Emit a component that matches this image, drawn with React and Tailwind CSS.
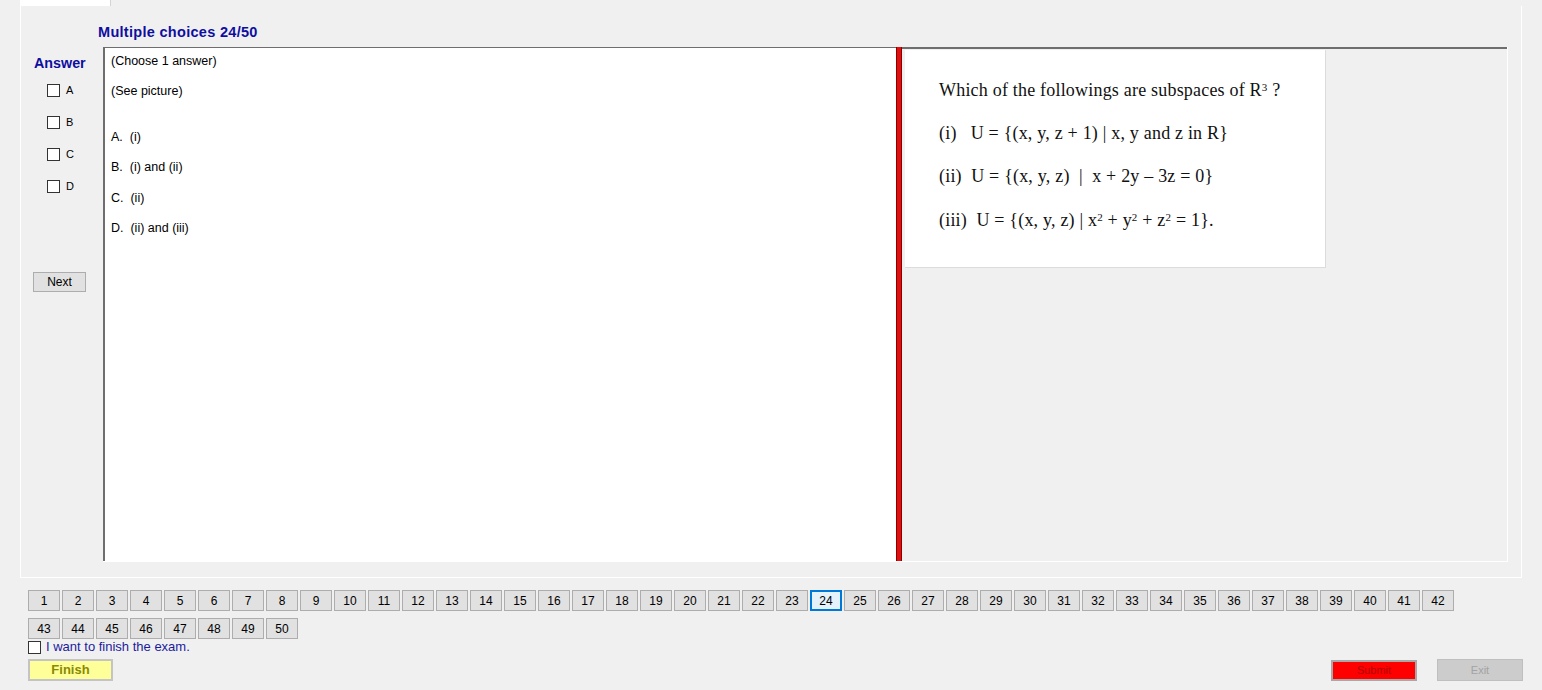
export default function App() {
  const row1 = Array.from({ length: 42 }, (_, i) => i + 1);
  const row2 = Array.from({ length: 8 }, (_, i) => i + 43);
  const letters = ["A", "B", "C", "D"];

  const NumBtn = ({ n }) => (
    <div
      className={
        n === 24
          ? "w-[32px] h-[21px] border-2 border-[#0078d7] bg-[#e5f1fb] text-[12px] flex items-center justify-center text-black"
          : "w-[32px] h-[21px] border border-[#adadad] bg-[#e1e1e1] text-[12px] flex items-center justify-center text-black"
      }
    >
      {n}
    </div>
  );

  return (
    <div className="w-[1542px] h-[690px] bg-[#f0f0f0] overflow-hidden text-black font-['Liberation_Sans',Arial,sans-serif]">
      {/* tab header */}
      <div className="ml-[20px] w-[91px] h-[6px] bg-white border-r border-[#d4d4d4]" />

      {/* tab page */}
      <div className="ml-[20px] w-[1502px] h-[572px] border-l border-r border-b border-white flex flex-col">
        <div className="h-[41px] pl-[77px] pt-[18px] text-[14.5px] leading-[16px] font-bold text-[#0e0ea0] tracking-[0.3px]">
          Multiple choices 24/50
        </div>

        <div className="flex h-[515px]">
          {/* left column */}
          <div className="w-[82px] flex flex-col">
            <div className="pl-[13px] pt-[8px] text-[14.3px] leading-[16px] font-bold text-[#0e0ea0]">
              Answer
            </div>
            <div className="flex flex-col gap-[19px] mt-[13px] ml-[26px]">
              {letters.map((l) => (
                <div key={l} className="flex items-center h-[13px]">
                  <div className="w-[13px] h-[13px] border border-[#333333] bg-white" />
                  <span className="ml-[6px] text-[11px] leading-[12px] -mt-[2px]">{l}</span>
                </div>
              ))}
            </div>
            <div className="ml-[12px] mt-[79px] w-[53px] h-[20px] border border-[#adadad] bg-[#e1e1e1] text-[12px] flex items-center justify-center">
              Next
            </div>
          </div>

          {/* question text + picture */}
          <div className="flex border-b border-r border-white">
            <div className="w-[793px] h-full bg-white border-l-2 border-t border-[#6e6e6e] pl-[6px] pt-[6px] text-[12.5px] leading-[15.2px] whitespace-pre">
              {"(Choose 1 answer)\n\n(See picture)\n\n\nA.  (i)\n\nB.  (i) and (ii)\n\nC.  (ii)\n\nD.  (ii) and (iii)"}
            </div>
            <div className="w-[6px] h-full bg-[#e01010] border-l border-r border-[#8a0000]" />
            <div className="w-[605px] h-full border-t-2 border-[#6e6e6e] pl-[3px] pt-[1px]">
              <div className="w-[421px] h-[218px] bg-white border-r border-b border-[#dcdcdc] pl-[34px] pt-[30px] text-[18px] leading-[20px] font-['Liberation_Serif','Times_New_Roman',serif] text-[#111] whitespace-pre tracking-[0.2px]">
                <div>
                  Which of the followings are subspaces of R<sup className="text-[11px]">3</sup> ?
                </div>
                <div className="mt-[23px]">{"(i)   U = {(x, y, z + 1) | x, y and z in R}"}</div>
                <div className="mt-[23px]">{"(ii)  U = {(x, y, z)  |  x + 2y – 3z = 0}"}</div>
                <div className="mt-[24px]">
                  {"(iii)  U = {(x, y, z) | x"}
                  <sup className="text-[11px]">2</sup>
                  {" + y"}
                  <sup className="text-[11px]">2</sup>
                  {" + z"}
                  <sup className="text-[11px]">2</sup>
                  {" = 1}."}
                </div>
              </div>
            </div>
          </div>
        </div>
      </div>

      {/* number rows */}
      <div className="mt-[12px] pl-[28px] flex gap-[2px]">
        {row1.map((n) => (
          <NumBtn key={n} n={n} />
        ))}
      </div>
      <div className="mt-[7px] pl-[28px] flex gap-[2px]">
        {row2.map((n) => (
          <NumBtn key={n} n={n} />
        ))}
      </div>

      <div className="mt-[1px] pl-[28px] flex items-center h-[14px]">
        <div className="w-[13px] h-[13px] border border-[#333333] bg-white" />
        <span className="ml-[5px] text-[13px] leading-[14px] text-[#1b1b9e]">
          I want to finish the exam.
        </span>
      </div>

      <div className="mt-[5px] pl-[28px] pr-[19px] flex items-start">
        <div className="w-[85px] h-[22px] border-2 border-[#c4c4c4] bg-[#ffff99] text-[13px] font-bold text-[#8a8a00] flex items-center justify-center">
          Finish
        </div>
        <div className="flex-1" />
        <div className="mt-[1px] w-[86px] h-[21px] border-2 border-[#a8a8a8] bg-[#ff0000] text-[11px] text-[#b00000] flex items-center justify-center">
          Submit
        </div>
        <div className="ml-[20px] w-[86px] h-[22px] border border-[#bfbfbf] bg-[#cccccc] text-[11px] text-[#a3a3a3] flex items-center justify-center">
          Exit
        </div>
      </div>
    </div>
  );
}
